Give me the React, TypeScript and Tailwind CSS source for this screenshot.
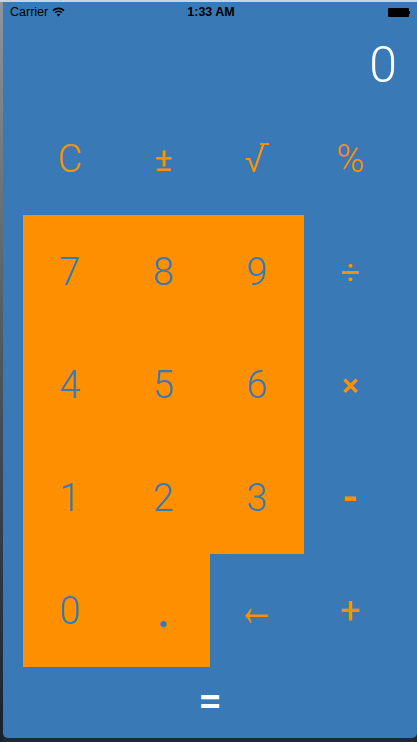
type Key = { label: string; orange: boolean; cls?: string };

const rows: Key[][] = [
  [
    { label: "C", orange: false },
    { label: "±", orange: false, cls: "text-[34px] font-normal" },
    { label: "√", orange: false },
    { label: "%", orange: false },
  ],
  [
    { label: "7", orange: true },
    { label: "8", orange: true },
    { label: "9", orange: true },
    { label: "÷", orange: false, cls: "text-[34px] font-normal" },
  ],
  [
    { label: "4", orange: true },
    { label: "5", orange: true },
    { label: "6", orange: true },
    { label: "×", orange: false, cls: "text-[32px] font-medium" },
  ],
  [
    { label: "1", orange: true },
    { label: "2", orange: true },
    { label: "3", orange: true },
    { label: "-", orange: false, cls: "text-[40px] font-bold" },
  ],
  [
    { label: "0", orange: true },
    { label: ".", orange: true, cls: "text-[40px] font-bold pt-[6px]" },
    { label: "←", orange: false, cls: "pb-[12px]" },
    { label: "+", orange: false, cls: "text-[36px] font-normal" },
  ],
];

const Wifi = () => (
  <svg width="13" height="10" viewBox="0 0 13 10" className="ml-[4px]">
    <path d="M1 3.6 A8 8 0 0 1 12 3.6" stroke="#000" strokeWidth="1.6" fill="none" />
    <path d="M3 5.8 A5 5 0 0 1 10 5.8" stroke="#000" strokeWidth="1.6" fill="none" />
    <path d="M6.5 9.5 L4.6 7.6 A2.7 2.7 0 0 1 8.4 7.6 Z" fill="#000" />
  </svg>
);

const KeyLabel = ({ k }: { k: Key }) => {
  if (k.label === "√") {
    // radical sign with the short overbar
    return (
      <span className="inline-flex items-start">
        <span>√</span>
        <span className="w-[9px] h-[2px] bg-[#fe9000] mt-[3px] -ml-[5px]" />
      </span>
    );
  }
  if (k.label === "←") {
    return (
      <span
        className="text-[38px] font-normal inline-block scale-y-[1.6]"
        style={{ fontFamily: '"Liberation Sans", "Noto Sans", sans-serif' }}
      >
        ←
      </span>
    );
  }
  return <span>{k.label}</span>;
};

const App = () => {
  return (
    <div className="w-[417px] h-[742px] bg-[#1c2a38] flex flex-col overflow-hidden">
      <div className="h-[2px] bg-[#cfd2d6]" />
      <div className="flex flex-1">
        {/* left edge of the desktop picture */}
        <div className="w-[3px] bg-gradient-to-b from-[#8e959d] via-[#4a5560] to-[#16222e]" />
        {/* phone screen */}
        <div
          className="w-[414px] h-[736px] bg-[#3979b5] rounded-b-[5px] flex flex-col"
          style={{ fontFamily: '"Helvetica Neue", Roboto, "Liberation Sans", sans-serif' }}
        >
          {/* status bar */}
          <div
            className="h-[20px] flex items-center justify-between px-[7px] text-[12.5px] text-black"
            style={{ fontFamily: '"Liberation Sans", Arial, sans-serif' }}
          >
            <div className="flex items-center w-[80px]">
              <span>Carrier</span>
              <Wifi />
            </div>
            <span className="font-semibold pl-[2px]">1:33 AM</span>
            <div className="flex items-center justify-end w-[80px]">
              <div className="w-[21px] h-[9px] bg-black rounded-[1px]" />
              <div className="w-[1.5px] h-[3px] bg-black" />
            </div>
          </div>

          {/* display */}
          <div className="h-[80px] flex items-center justify-end pr-[20px] pt-[6px]">
            <span className="text-white text-[50px] font-light leading-none">0</span>
          </div>

          {/* keypad */}
          <div className="px-[20px]">
            {rows.map((row, r) => (
              <div key={r} className="grid grid-cols-4 h-[113px]">
                {row.map((key) => (
                  <button
                    key={key.label}
                    className={`flex items-center justify-center leading-none ${
                      key.cls ?? "text-[38px] font-light"
                    } ${key.orange ? "bg-[#fe9000] text-[#3979b5]" : "text-[#fe9000]"}`}
                  >
                    <KeyLabel k={key} />
                  </button>
                ))}
              </div>
            ))}
          </div>

          {/* equals */}
          <button className="flex-1 flex items-center justify-center text-white text-[42px] font-medium leading-none pb-[4px]">
            =
          </button>
        </div>
      </div>
    </div>
  );
};

export default App;
